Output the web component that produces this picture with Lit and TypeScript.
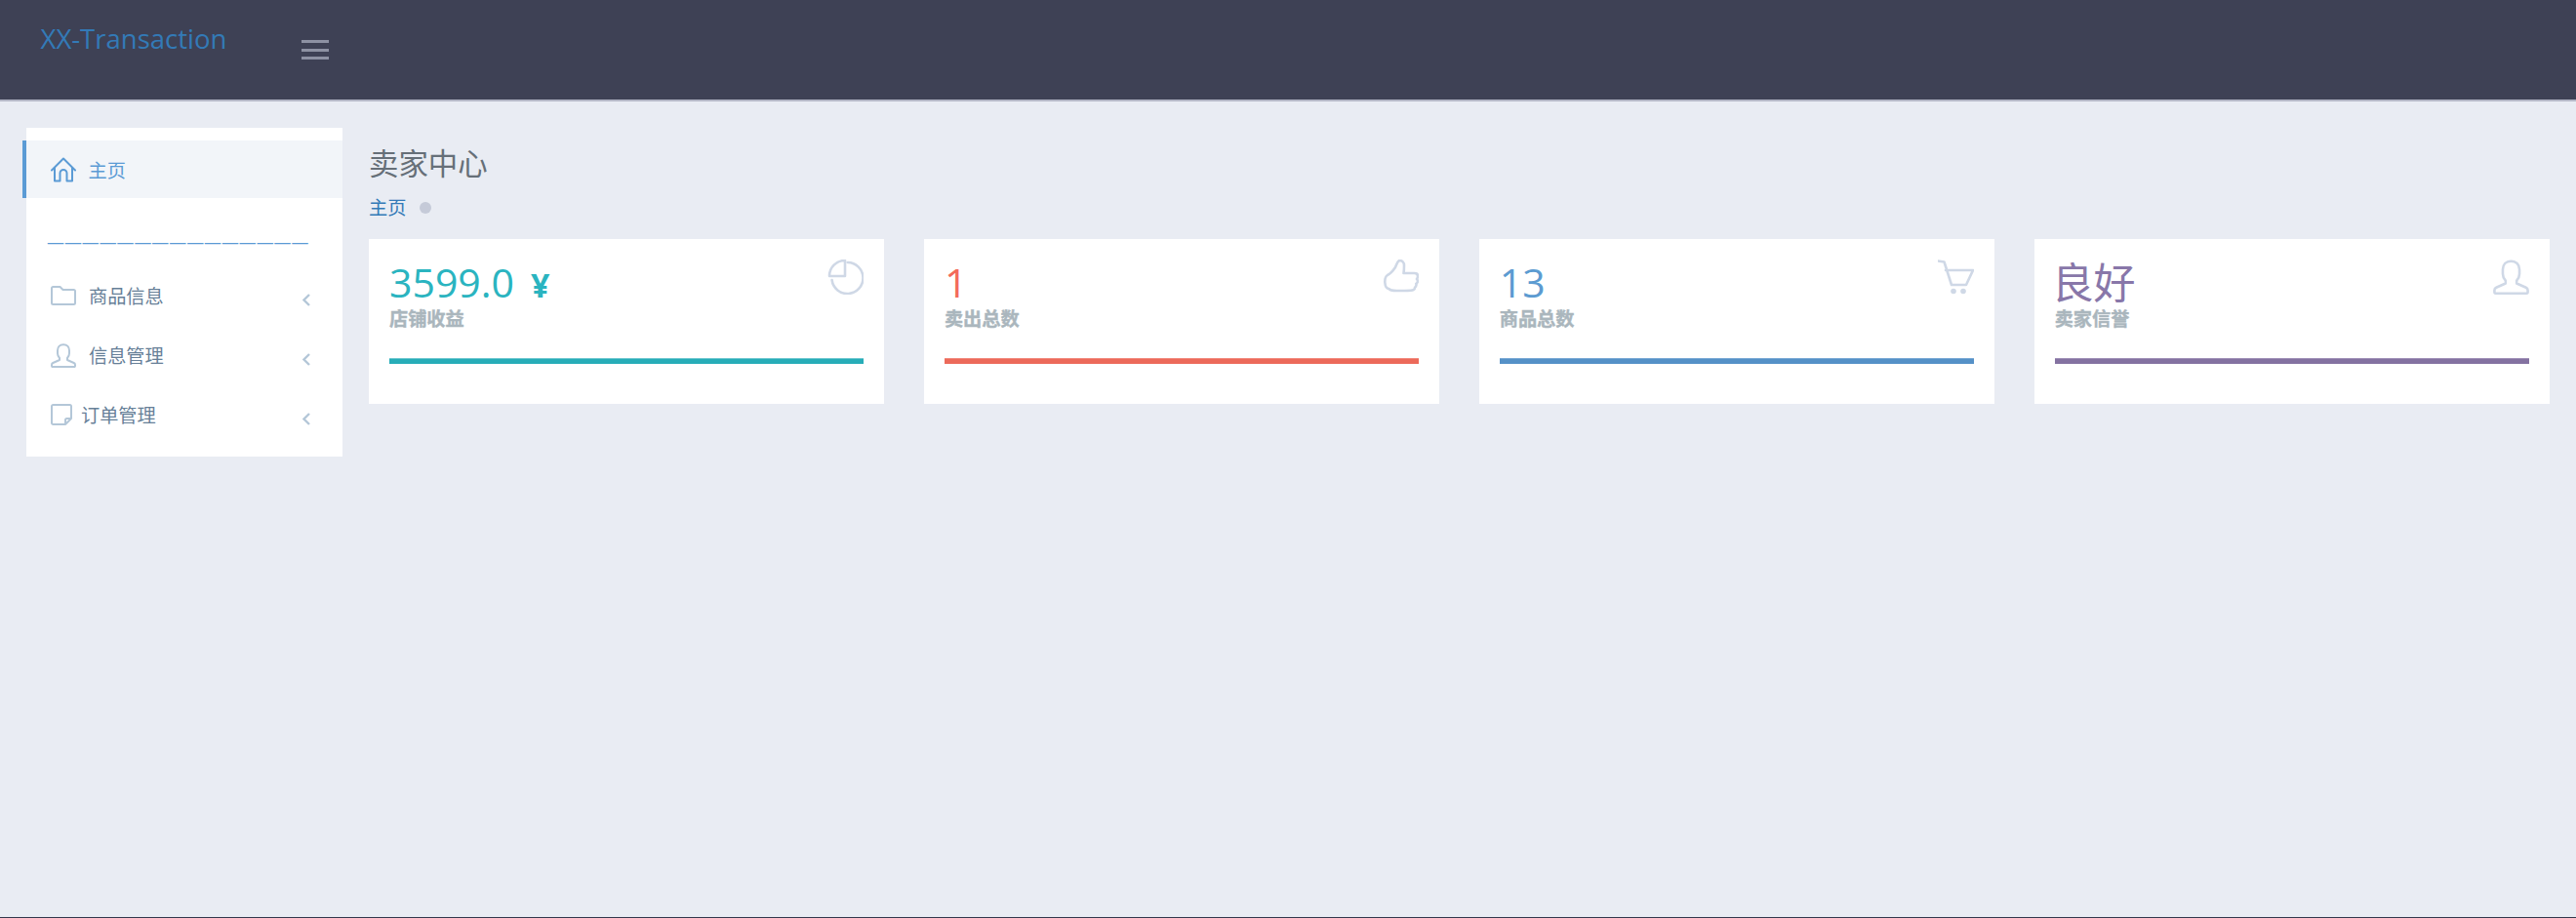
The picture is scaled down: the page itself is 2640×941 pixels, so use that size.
import { LitElement, html, css, svg } from "lit";
import { customElement } from "lit/decorators.js";

const USER = svg`<path vector-effect="non-scaling-stroke" d="M13 1.200c-3.800 0-6 2.600-6 6v3c0 2 .9 3.600 2 4.800v2L2.300 20c-.9.400-1.300 1-1.300 1.900v1.200c0 .6.400 1 1 1h22c.6 0 1-.4 1-1v-1.200c0-.9-.4-1.500-1.300-1.900L17 17v-2c1.100-1.200 2-2.800 2-4.800v-3c0-3.400-2.200-6-6-6z"/>`;

const ICONS: Record<string, { w: number; h: number; vb: string; body: unknown }> = {
  home: { w: 26, h: 26, vb: "0 0 26 26", body: svg`<path d="M1 13.500 13 1.500l12 12M4 11v13.500h5.500v-8a3.500 3.500 0 0 1 7 0v8H22V11"/>` },
  folder: { w: 26, h: 20, vb: "0 0 26 20", body: svg`<path d="M1 2.500c0-.8.5-1.500 1.500-1.500h7l3 3h11c1 0 1.500.6 1.500 1.500v12c0 1-.5 1.500-1.500 1.500h-21C1.500 19 1 18.500 1 17.500z"/>` },
  user: { w: 26, h: 25, vb: "0 0 26 25", body: USER },
  userLg: { w: 37, h: 36, vb: "0 0 26 25", body: USER },
  note: { w: 22, h: 22, vb: "0 0 22 22", body: svg`<path d="M1 2.500C1 1.600 1.600 1 2.500 1h17c.9 0 1.500.6 1.500 1.500V15l-6 6H2.500C1.600 21 1 20.400 1 19.500zM15 21v-4.500c0-.9.6-1.500 1.500-1.500H21"/>` },
  pie: { w: 37, h: 36, vb: "-1 0 37 36", body: svg`<path d="M17 1C8 1 1 8 1 17h16zM19.800 3A16 16 0 1 1 3.600 21"/>` },
  like: { w: 37, h: 36, vb: "-1 0 37 36", body: svg`<path d="M4 16c4-2 6-5 8-8 1-2 2-6 4-7 3 0 5 2 5 5 0 2 0 5-.5 8h11c2 0 3.500 1 3.500 3 0 1.500-.5 2.500-1 3 .8 1 1.200 2.500.5 3.500-.3.600-.8 1-1.200 1.300.4 1 .2 2-.6 3.100-.3.400-.5.600-.7.800.1 1-.5 2-1.500 2.500-1.500.8-5 .8-9 .8h-8c-5 0-7-.3-8-2C.5 30 0 18.500 4 16z"/>` },
  cart: { w: 37, h: 36, vb: "0 0 37 36", body: svg`<path d="M0 1.500l6.500 1L14 26h15l7-15H8"/><circle cx="16" cy="32.500" r="2.800" fill="currentColor" stroke="none"/><circle cx="26" cy="32.500" r="2.800" fill="currentColor" stroke="none"/>` },
};

function icon(name: string, cls: string) {
  const i = ICONS[name];
  return html`<svg class=${cls} width=${i.w} height=${i.h} viewBox=${i.vb} fill="none" stroke="currentColor" stroke-width="2" stroke-linejoin="round" stroke-linecap="round" preserveAspectRatio="none">${i.body}</svg>`;
}

const chevron = html`<svg class="chev" width="8" height="13" viewBox="0 0 8 13" fill="none" stroke="currentColor" stroke-width="2.400"><path d="M7 1 1.500 6.500 7 12"/></svg>`;

const MENU = [
  { icon: "folder", text: "商品信息", gap: 13 },
  { icon: "user", text: "信息管理", gap: 13 },
  { icon: "note", text: "订单管理", gap: 9 },
];

const CARDS = [
  { value: "3599.0", unit: "¥", label: "店铺收益", color: "#2ab4c0", bar: "#27adb8", top: "#6fc8d0", icon: "pie", cls: "val" },
  { value: "1", unit: "", label: "卖出总数", color: "#f36a5a", bar: "#ec6a5a", top: "#f28b7e", icon: "like", cls: "val" },
  { value: "13", unit: "", label: "商品总数", color: "#5c9bd1", bar: "#5591c7", top: "#7aa9d5", icon: "cart", cls: "val" },
  { value: "良好", unit: "", label: "卖家信誉", color: "#8877a9", bar: "#8472a1", top: "#a091b8", icon: "userLg", cls: "val cjk" },
];

@customElement("app-root")
export class AppRoot extends LitElement {
  static styles = css`
    :host {
      display: block;
      height: 941px;
      background: #e9ecf3;
      font-family: "Open Sans", "Noto Sans CJK SC", sans-serif;
      box-sizing: border-box;
      border-bottom: 1px solid #34384c;
      overflow: hidden;
    }
    .top {
      height: 102px;
      background: #3e4155;
      border-bottom: 2px solid #b4b7c6;
      display: flex;
      align-items: flex-start;
    }
    .brand {
      margin: 22px 0 0 41.500px;
      width: 267.500px;
      font-size: 27.500px;
      line-height: 36px;
      color: #337ab7;
    }
    .burger {
      margin-top: 41px;
      width: 28px;
      display: flex;
      flex-direction: column;
      gap: 5.500px;
    }
    .burger span {
      display: block;
      height: 3px;
      background: #8d91a3;
    }
    .body {
      display: flex;
      align-items: flex-start;
      padding: 27px 27px 0;
      gap: 27px;
    }
    .side {
      flex: none;
      width: 324px;
      height: 337px;
      box-sizing: border-box;
      background: #fff;
      padding-top: 13px;
    }
    .active {
      display: flex;
      align-items: center;
      height: 59px;
      margin-left: -4px;
      border-left: 4.500px solid #5b9bd5;
      background: #f2f5f9;
      padding-left: 24.500px;
      color: #5b9bd5;
      font-size: 19.200px;
    }
    .active span { margin-left: 13px; }
    .sep {
      height: 69.500px;
      box-sizing: border-box;
      padding: 33px 0 0 21px;
      font-size: 17.900px;
      line-height: 24px;
      color: #5b9bd5;
      white-space: nowrap;
    }
    .row {
      display: flex;
      align-items: center;
      height: 61px;
      padding: 0 33px 0 25px;
      color: #678098;
      font-size: 19.200px;
    }
    .row .ic { color: #b4c7d8; flex: none; }
    .row .lbl { flex: 1; }
    .chev { color: #b4c7d8; margin-top: 8px; }
    .main { flex: 1; min-width: 0; }
    h1 {
      margin: 17px 0 0;
      height: 40px;
      font-size: 30.400px;
      line-height: 40px;
      font-weight: 400;
      color: #666f78;
    }
    .crumb {
      margin-top: 11.500px;
      height: 24px;
      display: flex;
      align-items: center;
      gap: 14px;
      font-size: 19.200px;
      color: #337ab7;
    }
    .dot {
      width: 12px;
      height: 12px;
      margin-top: 2px;
      border-radius: 50%;
      background: #c5cad8;
    }
    .cards {
      margin-top: 21.500px;
      display: grid;
      grid-template-columns: repeat(4, 1fr);
      gap: 40.500px;
    }
    .card {
      height: 169px;
      box-sizing: border-box;
      background: #fff;
      padding: 21px 21px 0;
    }
    .head {
      display: flex;
      justify-content: space-between;
      align-items: flex-start;
      height: 101px;
    }
    .val {
      font-size: 41px;
      line-height: 47px;
      height: 49px;
    }
    .val.cjk {
      font-size: 43px;
      margin-left: -3px;
    }
    .unit {
      font-size: 34px;
      font-weight: 700;
      margin-left: 17px;
    }
    .lab {
      font-size: 19.200px;
      line-height: 24px;
      font-weight: 700;
      color: #aab6bd;
      -webkit-text-stroke: 0.4px #aab6bd;
    }
    .card .ic { color: #cfd8e6; flex: none; stroke-width: 2.600px; }
    .bar {
      height: 6px;
      box-sizing: border-box;
      border-top: 1px solid;
    }
  `;

  render() {
    return html`
      <div class="top">
        <div class="brand">XX-Transaction</div>
        <div class="burger"><span></span><span></span><span></span></div>
      </div>
      <div class="body">
        <nav class="side">
          <div class="active">${icon("home", "ic")}<span>主页</span></div>
          <div class="sep">———————————————</div>
          ${MENU.map(
            (m) => html`<div class="row">
              ${icon(m.icon, "ic")}
              <span class="lbl" style="margin-left:${m.gap}px">${m.text}</span>
              ${chevron}
            </div>`
          )}
        </nav>
        <div class="main">
          <h1>卖家中心</h1>
          <div class="crumb"><span>主页</span><i class="dot"></i></div>
          <div class="cards">
            ${CARDS.map(
              (c) => html`<div class="card">
                <div class="head">
                  <div>
                    <div class=${c.cls} style="color:${c.color}">${c.value}${c.unit ? html`<span class="unit">${c.unit}</span>` : ""}</div>
                    <div class="lab">${c.label}</div>
                  </div>
                  ${icon(c.icon, "ic")}
                </div>
                <div class="bar" style="background:${c.bar};border-color:${c.top}"></div>
              </div>`
            )}
          </div>
        </div>
      </div>
    `;
  }
}
